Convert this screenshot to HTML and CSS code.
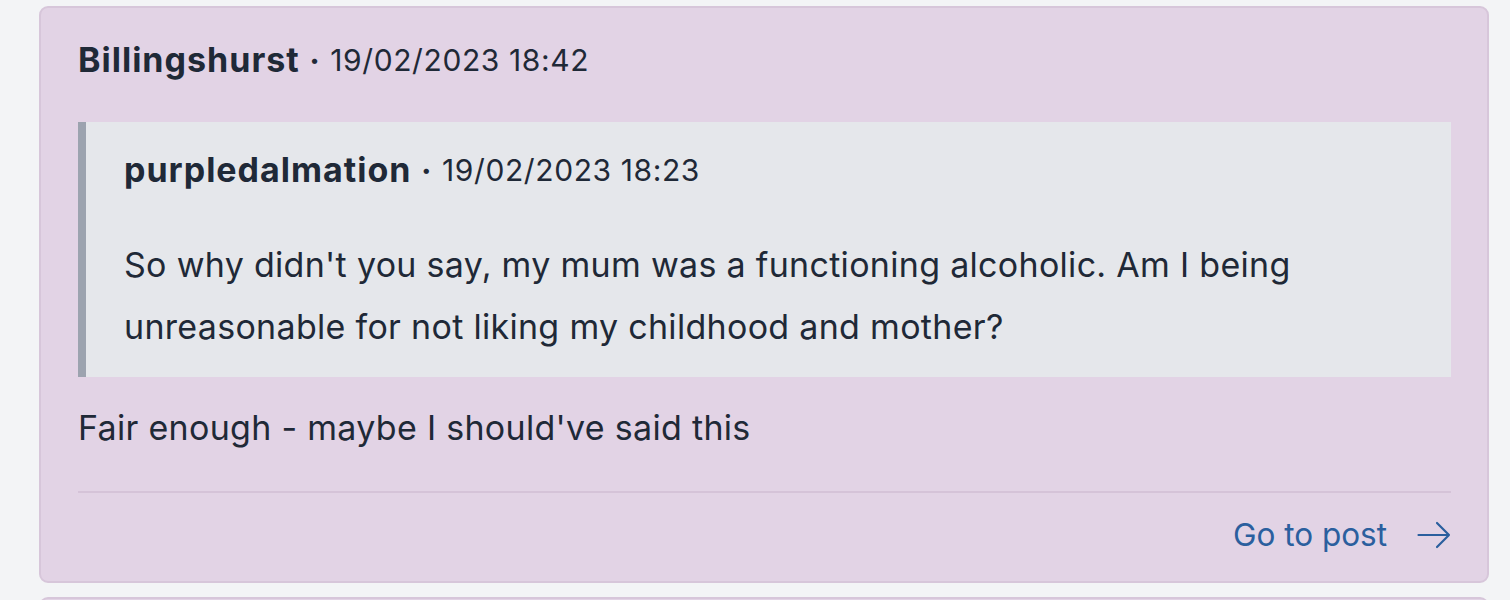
FILE: index.html
```html
<!DOCTYPE html>
<html lang="en">
<head>
<meta charset="utf-8">
<link rel="stylesheet" href="styles.css">
</head>
<body>
<div class="page">
  <article class="card">
    <header class="meta"><span class="author">Billingshurst</span><span class="sep">•</span><span class="date">19/02/2023 18:42</span></header>
    <blockquote class="quote">
      <div class="meta"><span class="author">purpledalmation</span><span class="sep">•</span><span class="date">19/02/2023 18:23</span></div>
      <p class="text">So why didn't you say, my mum was a functioning alcoholic. Am I being unreasonable for not liking my childhood and mother?</p>
    </blockquote>
    <p class="text body">Fair enough - maybe I should've said this</p>
    <footer class="foot">
      <a class="go" href="#">Go to post
        <svg class="arrow" width="34" height="28" viewBox="0 0 34 28" fill="none" stroke="currentColor" stroke-width="2.2" stroke-linecap="round" stroke-linejoin="round"><path d="M1.5 14H32M20 2l12 12-12 12"/></svg>
      </a>
    </footer>
  </article>
  <div class="card next"></div>
</div>
</body>
</html>
```
FILE: styles.css
```css
* { box-sizing: border-box; }
html, body { margin: 0; padding: 0; }
body {
  background: #f3f4f6;
  font-family: Inter, "Noto Sans", sans-serif;
  color: #1f2937;
  overflow: hidden;
  height: 600px;
}
.page {
  padding: 6px 21px 0 39px;
  display: flex;
  flex-direction: column;
  gap: 14px;
}
.card {
  background: #e2d3e5;
  border: 2px solid #d7c6da;
  border-radius: 9px;
  padding: 30px 36px 24px 37px;
}
.card.next { height: 40px; padding: 0; }
.meta {
  display: flex;
  align-items: center;
  font-size: 30px;
  line-height: 44px;
  color: #1f2937;
}
.author { font-weight: 700; font-size: 34px; letter-spacing: 1px; }
.sep { font-size: 17px; margin: 0 11px 0 10px; }
.date { font-weight: 400; letter-spacing: 0.6px; }
.quote {
  margin: 40px 0 0 0;
  background: #e5e7eb;
  border-left: 8px solid #9ca3af;
  padding: 26px 30px 19px 38px;
}
.text {
  margin: 42px 0 0 0;
  font-size: 34px;
  line-height: 62px;
  letter-spacing: 0.3px;
  color: #1f2937;
}
.text.body {
  margin: 20px 0 0 0;
  padding-bottom: 32px;
  border-bottom: 2px solid #d5c3d8;
}
.foot {
  display: flex;
  justify-content: flex-end;
  padding-top: 20px;
}
.go {
  display: flex;
  align-items: center;
  gap: 30px;
  font-size: 31.5px;
  line-height: 44px;
  color: #2b5f9e;
  text-decoration: none;
}
.arrow { display: block; }
```
